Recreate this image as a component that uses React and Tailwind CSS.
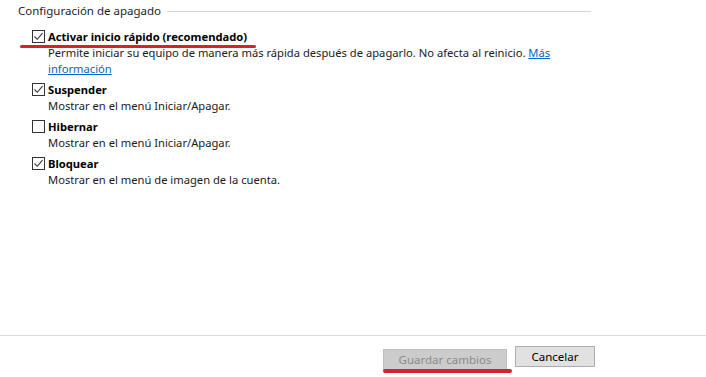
import React from "react";

const font = { fontFamily: '"Noto Sans", "Open Sans", sans-serif' };

/* ------------ Checkbox ------------ */
const Check = ({ checked }) => {
  return (
    <span className="w-[13px] h-[13px] border border-[#333333] bg-white flex items-center justify-center shrink-0">
      {checked && (
        <svg width="11" height="11" viewBox="0 0 11 11">
          <path d="M1.5 5.5 L4.3 8.3 L9.5 2.2" fill="none" stroke="#333333" strokeWidth="1.1" />
        </svg>
      )}
    </span>
  );
};

/* ------------ Option ------------ */
const Option = ({ checked, label, children, marked }) => {
  return (
    <div className="relative">
      <div className="flex items-center gap-[3px] h-[17px] pl-[32px]">
        <Check checked={checked} />
        <span className="font-bold text-[11.2px] text-black leading-none">{label}</span>
      </div>
      {marked && (
        <div className="absolute left-[20px] top-[17px] w-[236px] h-[3px] rounded-full bg-[#d3232b]"></div>
      )}
      <p className="pl-[48px] text-[11.2px] leading-[16px] text-[#1a1a1a] w-[566px]">{children}</p>
    </div>
  );
};

const App = () => {
  return (
    <div className="w-[706px] h-[377px] bg-white text-[#1a1a1a] overflow-hidden" style={font}>
      <div className="h-[335px] pt-[3px]">
        {/* Header */}
        <div className="flex items-center gap-[6px] pl-[18px] w-[591px] h-[16px]">
          <span className="text-[11.5px] leading-none text-[#1e1e1e] whitespace-nowrap">Configuración de apagado</span>
          <div className="flex-1 h-px bg-[#d5d5d5]"></div>
        </div>

        {/* Options */}
        <div className="flex flex-col gap-[4px] mt-[9px]">
          <Option checked label="Activar inicio rápido (recomendado)" marked>
            Permite iniciar su equipo de manera más rápida después de apagarlo. No afecta al reinicio.{" "}
            <a className="text-[#0066cc] underline">Más información</a>
          </Option>
          <Option checked label="Suspender">
            Mostrar en el menú Iniciar/Apagar.
          </Option>
          <Option checked={false} label="Hibernar">
            Mostrar en el menú Iniciar/Apagar.
          </Option>
          <Option checked label="Bloquear">
            Mostrar en el menú de imagen de la cuenta.
          </Option>
        </div>
      </div>

      {/* Footer */}
      <div className="border-t border-[#dcdcdc] flex justify-end gap-[8px] pr-[111px] pt-[10px]">
        <div className="relative">
          <button className="w-[124px] h-[21px] bg-[#cccccc] border border-[#bfbfbf] text-[11.5px] text-[#8a8a8a] leading-none">
            Guardar cambios
          </button>
          <div className="absolute left-0 top-[23px] w-[129px] h-[4px] rounded-full bg-[#d3232b]"></div>
        </div>
        <button className="w-[80px] h-[21px] bg-[#e1e1e1] border border-[#adadad] text-[11.5px] text-black leading-none">
          Cancelar
        </button>
      </div>
    </div>
  );
};

export default App;
